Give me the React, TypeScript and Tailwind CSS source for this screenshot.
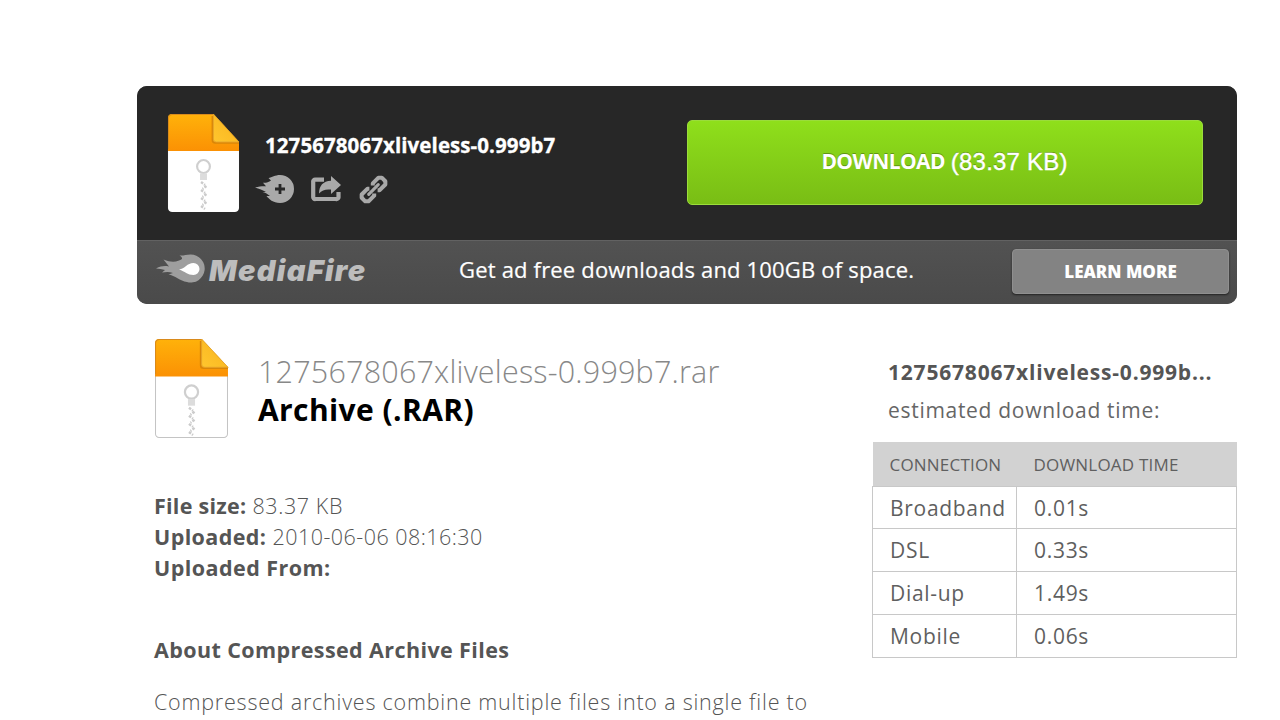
import React from 'react';

const connections = [
  { name: 'Broadband', time: '0.01s' },
  { name: 'DSL', time: '0.33s' },
  { name: 'Dial-up', time: '1.49s' },
  { name: 'Mobile', time: '0.06s' },
];

const ArchiveIcon: React.FC<{ id: string; outlined?: boolean }> = ({ id, outlined }) => (
  <svg width={outlined ? 75 : 73} height={outlined ? 101 : 100} viewBox="0 0 74 100" preserveAspectRatio="none" className="shrink-0">
    <defs>
      <linearGradient id={id} x1="0" y1="0" x2="0" y2="1">
        <stop offset="0" stopColor="#ffb20a" />
        <stop offset="1" stopColor="#fb9104" />
      </linearGradient>
      <linearGradient id={`${id}-fold`} x1="0" y1="1" x2="1" y2="0">
        <stop offset="0" stopColor="#ffc62e" />
        <stop offset="1" stopColor="#f8b21c" />
      </linearGradient>
    </defs>
    <path
      d="M1.5 37H72.5V95a3.5 3.5 0 0 1-3.5 3.5H5A3.5 3.5 0 0 1 1.5 95Z"
      fill="#fff"
      stroke={outlined ? '#c4c4c4' : '#fff'}
    />
    <path d="M1 38V5a4 4 0 0 1 4-4H47L73 29V38Z" fill={`url(#${id})`} />
    <path d="M1.5 36V5A3.5 3.5 0 0 1 5 1.5H47" fill="none" stroke="#d98a1c" strokeWidth="1" />
    <path d="M46 3V27a3 3 0 0 0 3 3H73" fill="none" stroke="#d98608" strokeWidth="1.6" />
    <path d="M47 1V26a3 3 0 0 0 3 3H73Z" fill={`url(#${id}-fold)`} stroke="#dfa02e" strokeWidth=".8" />
    <circle cx="37" cy="53.500" r="6.5" fill="none" stroke="#cfcfcf" strokeWidth="2.2" />
    <path d="M33.5 60.500H40.500V67H33.500Z" fill="#dcdcdc" />
    <path
      d="M34.5 69l4 3M40 73l-4 3M34.5 77l4 3M40 81l-4 3M34.5 85l4 3M40 89l-4 3M34.5 93l4 3"
      stroke="#cbcbcb"
      strokeWidth="2.4"
      strokeDasharray="2.6 1.2"
    />
  </svg>
);

const SaveIcon = () => (
  <svg width="39" height="28" viewBox="0 0 39 28">
    <path
      d="M0 12.500C4 11.500 7 11 11 11.200L8 7.800C11 8 13.500 7.500 16 5.500L13.500 3C17 2.500 20 0 25 0A14 14 0 1 1 25 28C18 28 14 24 11.500 21H15C12 18.500 10 17.500 7.500 17H11C8 15 4 14 0 12.500Z"
      fill="#a9a9a9"
    />
    <path d="M25 9V19M20 14H30" stroke="#272727" strokeWidth="2.8" />
  </svg>
);

const ShareIcon = () => (
  <svg width="30" height="26" viewBox="0 0 30 26">
    <path
      d="M13 3.700H4.500A2 2 0 0 0 2.200 6V20.700A2 2 0 0 0 4.500 23H25A2 2 0 0 0 27.500 20.700V16"
      fill="none"
      stroke="#a9a9a9"
      strokeWidth="4.2"
    />
    <path d="M20 0L30 9L20 18V13.500C14.500 13 11 14 8 17.500C8 10 12 5 20 4.800Z" fill="#a9a9a9" />
  </svg>
);

const LinkIcon = () => (
  <svg width="29" height="29" viewBox="0 0 30 30" fill="none" stroke="#a9a9a9">
    <g transform="rotate(-45 15 15)">
      <path
        d="M12.500 18.500L11 20H2.700L.3 17.600V12.400L2.700 10H11L12.500 11.500M17.500 11.500L19 10H27.300L29.700 12.400V17.600L27.300 20H19L17.500 18.500"
        strokeWidth="4.2"
        strokeLinejoin="round"
      />
      <path d="M8 15H22" strokeWidth="3.2" strokeLinecap="round" />
    </g>
  </svg>
);

const FlameLogo = () => (
  <svg width="49" height="29" viewBox="0 0 49 29">
    <path
      d="M0 14.500C5 12 8.500 11.500 13 12.500L7.500 5.500C14 8 18 8.500 23 6.500C26.500 5.200 27.500 4 23.500 1.500C28 1.800 30 .5 34.500 .5A14 14 0 1 1 31 28C24 27 19 21.500 12.500 20.500C15 19.500 16 19.500 17 19C13 17.500 9 18.200 6 18.500L9 16C6 15 3 15 0 14.500Z"
      fill="#9e9e9e"
    />
    <path d="M23 15.500C29 14.800 31 9 37.500 9A6 6 0 0 1 37.500 21C31.500 21 29 17.500 23 15.500Z" fill="#fff" />
  </svg>
);

const DownloadCard = () => (
  <div className="h-[218px] overflow-hidden rounded-[10px] bg-[#4b4b4b] text-white">
    <div className="flex h-[154px] justify-between bg-[#272727] pl-[30px] pr-[34px]">
      <div className="flex pt-[27px]">
        <ArchiveIcon id="archive-top" />
        <div className="pl-[15px] pt-[18px]">
          <h1 className="pl-[10px] text-[20.5px] font-bold leading-[28px] tracking-[0.08px] [-webkit-text-stroke:0.3px_white]">
            1275678067xliveless-0.999b7
          </h1>
          <div className="mt-[15px] flex h-[30px] items-center">
            <SaveIcon />
            <span className="pl-[17px]">
              <ShareIcon />
            </span>
            <span className="pl-[18px]">
              <LinkIcon />
            </span>
          </div>
        </div>
      </div>
      <button className="mt-[34px] flex h-[85px] w-[516px] items-center justify-center rounded-[5px] border border-[#9bdc3c] bg-gradient-to-b from-[#8fdf1b] to-[#79bd15] pb-px pr-px [text-shadow:0_-1px_0_#5f9612]">
        <span className="text-[21px] font-bold tracking-[-0.6px]">DOWNLOAD</span>
        <span className="pl-[6px] font-['Liberation_Sans',sans-serif] text-[24px] tracking-[0.2px] [-webkit-text-stroke:0.4px_white]">(83.37 KB)</span>
      </button>
    </div>
    <div className="flex h-[64px] border-t border-[#626262] bg-gradient-to-b from-[#525252] to-[#4a4a4a] pr-2 pt-2">
      <div className="flex w-[322px] pl-[19px] pt-[5px]">
        <FlameLogo />
        <span className="pl-1 pt-[2px] font-['Inter',sans-serif] text-[29px] font-black italic leading-none tracking-[1.3px] text-[#bdbdbd]">
          MediaFire
        </span>
      </div>
      <p className="grow whitespace-nowrap pt-1 text-[22px] leading-[33px] tracking-[0.18px] [-webkit-text-stroke:0.2px_white]">
        Get ad free downloads and 100GB of space.
      </p>
      <button className="h-[45px] w-[217px] rounded-[4px] border border-[#8f8f8f] bg-[#838383] pt-px text-[17px] font-extrabold shadow-[0_1px_2px_#222]">
        LEARN MORE
      </button>
    </div>
  </div>
);

const FileDetails = () => (
  <section className="w-[735px] pl-[17px] pt-[34px]">
    <div className="flex h-[100px]">
      <ArchiveIcon id="archive-details" outlined />
      <div className="pl-[29px] pt-[14px]">
        <h2 className="whitespace-nowrap text-[30.5px] font-light leading-[39px] tracking-[0.2px] text-[#888]">
          1275678067xliveless-0.999b7.rar
        </h2>
        <p className="text-[30px] font-bold leading-[37px] tracking-[0.4px] text-black">Archive (.RAR)</p>
      </div>
    </div>
    <div className="pt-[52px] text-[21.5px] leading-[31px] tracking-[0.6px]">
      <p>
        <b className="font-bold tracking-[0.25px]">File size:</b> <span className="font-light">83.37 KB</span>
      </p>
      <p>
        <b className="font-bold tracking-[0.4px]">Uploaded:</b>{' '}
        <span className="font-light tracking-[0.46px]">2010-06-06 08:16:30</span>
      </p>
      <p>
        <b className="font-bold tracking-[0.45px]">Uploaded From:</b>
      </p>
    </div>
    <h3 className="pt-[51px] text-[21.5px] font-bold leading-[31px] tracking-[0.4px]">About Compressed Archive Files</h3>
    <p className="whitespace-nowrap pt-[21px] text-[21.5px] font-light leading-[31px] tracking-[0.78px]">
      Compressed archives combine multiple files into a single file to
    </p>
  </section>
);

const DownloadTimes = () => (
  <aside className="w-[365px] pt-[49px]">
    <div className="pl-4 text-[21px] leading-[38px] tracking-[0.7px]">
      <p className="font-bold tracking-[0.8px]">1275678067xliveless-0.999b...</p>
      <p className="text-[#666]">estimated download time:</p>
    </div>
    <table className="mt-[13px] w-full table-fixed border-collapse text-left text-[#5f5f5f]">
      <thead className="bg-[#d2d2d2] text-[17px] tracking-[0.2px]">
        <tr className="h-[44px]">
          <th className="w-[144px] pl-[17px] pt-px font-normal">CONNECTION</th>
          <th className="pl-[17px] pt-px font-normal">DOWNLOAD TIME</th>
        </tr>
      </thead>
      <tbody className="text-[21px] tracking-[0.7px]">
        {connections.map(row => (
          <tr key={row.name} className="h-[43px] first:h-[42px]">
            <td className="border border-[#c8c8c8] pl-[17px] pt-px leading-[30px]">{row.name}</td>
            <td className="border border-[#c8c8c8] pl-[17px] pt-px leading-[30px]">{row.time}</td>
          </tr>
        ))}
      </tbody>
    </table>
  </aside>
);

const App = () => (
  <div className="h-[720px] w-[1280px] overflow-hidden bg-white pl-[137px] pr-[43px] pt-[86px] font-['Open_Sans',sans-serif] text-[#555]">
    <DownloadCard />
    <main className="flex">
      <FileDetails />
      <DownloadTimes />
    </main>
  </div>
);

export default App;
